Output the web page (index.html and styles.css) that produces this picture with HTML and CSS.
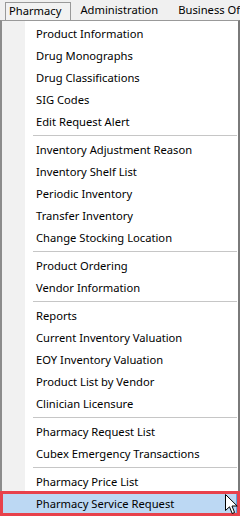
FILE: index.html
```html
<!DOCTYPE html>
<html lang="en">
<head>
  <meta charset="UTF-8">
  <title>Pharmacy menu</title>
  <link rel="stylesheet" href="styles.css">
</head>
<body>
  <div class="menubar">
    <div class="top-item open">Pharmacy</div>
    <div class="top-item">Administration</div>
    <div class="top-item">Business Office</div>
  </div>

  <div class="dropdown">
    <div class="item">Product Information</div>
    <div class="item">Drug Monographs</div>
    <div class="item">Drug Classifications</div>
    <div class="item">SIG Codes</div>
    <div class="item">Edit Request Alert</div>
    <div class="sep"></div>
    <div class="item">Inventory Adjustment Reason</div>
    <div class="item">Inventory Shelf List</div>
    <div class="item">Periodic Inventory</div>
    <div class="item">Transfer Inventory</div>
    <div class="item">Change Stocking Location</div>
    <div class="sep"></div>
    <div class="item">Product Ordering</div>
    <div class="item">Vendor Information</div>
    <div class="sep"></div>
    <div class="item">Reports</div>
    <div class="item">Current Inventory Valuation</div>
    <div class="item">EOY Inventory Valuation</div>
    <div class="item">Product List by Vendor</div>
    <div class="item">Clinician Licensure</div>
    <div class="sep"></div>
    <div class="item">Pharmacy Request List</div>
    <div class="item">Cubex Emergency Transactions</div>
    <div class="sep"></div>
    <div class="item">Pharmacy Price List</div>
    <div class="item hover">Pharmacy Service Request</div>
  </div>

  <!-- red annotation box and mouse pointer drawn over the menu -->
  <div class="callout"></div>
  <svg class="pointer" width="13" height="21" viewBox="0 0 13 21">
    <path d="M0.5 0.5 L0.5 16.5 L4.5 12.8 L7.2 19.5 L9.6 18.5 L7 12 L12.2 12 Z" fill="#fff" stroke="#000" stroke-width="1" stroke-linejoin="miter"/>
  </svg>
</body>
</html>
```

FILE: styles.css
```css
html, body {
    margin: 0;
    padding: 0;
}
body {
    width: 240px;
    height: 516px;
    overflow: hidden;
    position: relative;
    background: #f0f0f0;
    font-family: "Noto Sans", "Liberation Sans", sans-serif;
    font-size: 11.2px;
    color: #000;
}

/* top menu strip */
.menubar {
    display: flex;
    height: 20px;
    padding-left: 5px;
    background: #f0f0f0;
    white-space: nowrap;
    overflow: hidden;
}
.top-item {
    box-sizing: border-box;
    height: 20px;
    padding: 1px 10px 0 10px;
    line-height: 18px;
}
.top-item.open + .top-item {
    padding-left: 9px;
}
.top-item.open {
    position: relative;
    z-index: 1;
    margin-top: 2px;
    height: 19px;
    margin-bottom: -1px;
    line-height: 16px;
    padding: 0 9px 0 3px;
    border: 1px solid #999;
    border-bottom: 0;
    background: #f2f2f2;
}

/* the dropped down list */
.dropdown {
    box-sizing: border-box;
    width: 240px;
    height: 496px;
    padding: 2px 1px 0 1px;
    border: 1px solid #999;
    border-left: 2px solid #8c8c8c;
    border-right: 2px solid #7a7a7a;
    background: linear-gradient(to right, #f1f1f1 0, #f1f1f1 23px, #fff 23px);
}
.item {
    box-sizing: border-box;
    height: 22px;
    line-height: 22px;
    padding-left: 33px;
    white-space: nowrap;
}
.item.hover {
    background: #bcd8f3;
    border-right: 1px solid #5fa0de;
}
.sep {
    box-sizing: border-box;
    height: 6px;
    padding-top: 2px;
    margin-left: 30px;
}
.sep::after {
    content: "";
    display: block;
    height: 1px;
    background: #c6c6c6;
}

.callout {
    position: absolute;
    left: 0;
    top: 491px;
    width: 240px;
    height: 25px;
    box-sizing: border-box;
    border: 3px solid #e8414b;
}
.pointer {
    position: absolute;
    left: 225px;
    top: 494px;
}
```
